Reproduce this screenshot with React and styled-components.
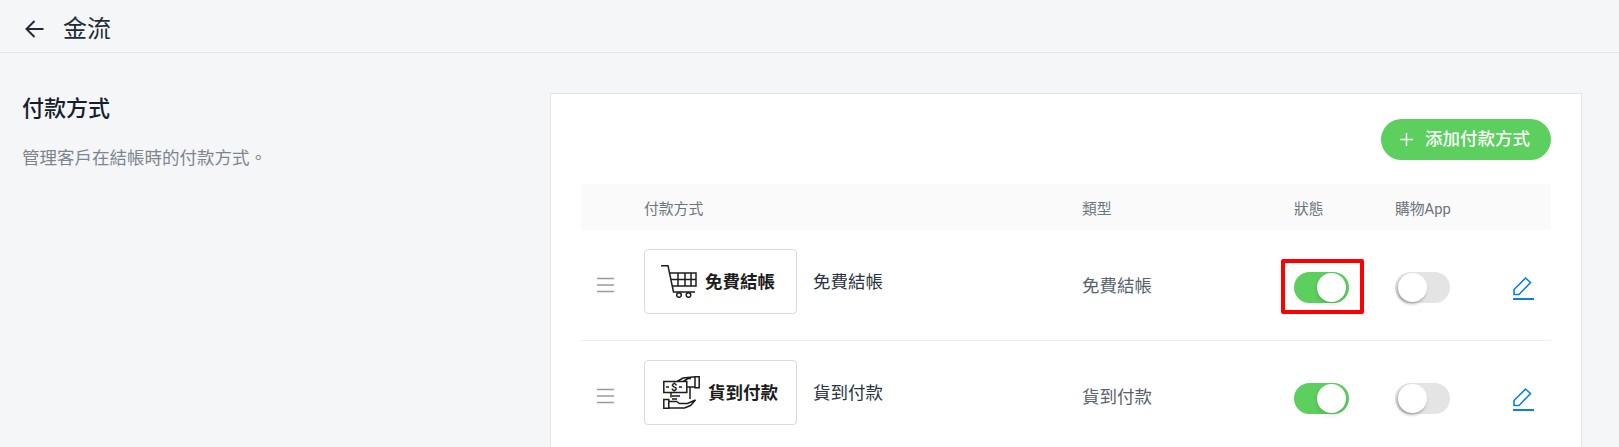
import React from "react";
import styled, { createGlobalStyle } from "styled-components";

const Global = createGlobalStyle`
  html, body { margin: 0; padding: 0; height: 100%; overflow: hidden; background: #f5f6f8; }
  body { font-family: Roboto, "Noto Sans CJK TC", sans-serif; color: #212b36; }
  * { box-sizing: border-box; }
`;
const Header = styled.header`
  height: 53px; display: flex; align-items: center; gap: 16px; padding: 6px 0 0 23px;
  border-bottom: 1px solid #e4e6ea;
`;
const BackIcon = styled.svg`width: 24px; height: 24px; flex: none;`;
const Title = styled.h1`margin: 0; font-size: 24px; font-weight: 400; line-height: 32px; color: #212b36;`;
const Main = styled.main`display: grid; grid-template-columns: 550px 1032px; padding-top: 40px;`;
const Intro = styled.section`padding: 1px 0 0 22px;`;
const IntroTitle = styled.h2`margin: 0; font-size: 22px; font-weight: 500; line-height: 30px; color: #16202c;`;
const IntroText = styled.p`margin: 22px 0 0; font-size: 17.5px; line-height: 24px; color: #7d868f;`;
const Card = styled.section`
  background: #fff; border: 1px solid #e3e5e8; padding: 25px 30px 0 30px; min-height: 420px;
`;
const Toolbar = styled.div`display: flex; justify-content: flex-end; margin-bottom: 24px;`;
const AddButton = styled.button`
  height: 41px; width: 170px; border: 0; border-radius: 21px; background: #5ccf5f; color: #fff;
  display: flex; align-items: center; gap: 12px; padding: 0 0 0 19px;
  font: 500 17.5px/1 Roboto, "Noto Sans CJK TC", sans-serif;
`;
const columns = "63px 438px 212px 101px 118px 1fr";
const HeadRow = styled.div`
  display: grid; grid-template-columns: ${columns}; align-items: center; height: 46px;
  background: #fafafa; font-size: 14.800px; color: #6d747c;
`;
const Row = styled.div`
  display: grid; grid-template-columns: ${columns}; align-items: center; height: 111px;
  border-bottom: 1px solid ${p => (p.$last ? "transparent" : "#eeeff1")};
`;
const Drag = styled.svg`width: 17px; height: 16px; margin-left: 16px;`;
const NameCell = styled.div`display: flex; align-items: center; gap: 16px; margin-top: -8px;`;
const LogoBox = styled.div`
  width: 153px; height: 65px; border: 1px solid #d9dadc; border-radius: 4px; background: #fff;
  display: flex; align-items: center; gap: ${p => p.$gap}px; padding: 0 0 0 ${p => p.$pad}px;
`;
const LogoText = styled.span`font-size: 17.5px; font-weight: 700; color: #1d1d1d; margin-top: -2px;`;
const Name = styled.span`font-size: 17.5px; color: #2a343e; margin-top: -1px;`;
const TypeText = styled.span`font-size: 17.5px; color: #59636d; margin-top: -2px;`;
const SwitchWrap = styled.div`position: relative; width: 55px; height: 31px; margin-top: 5px;`;
const Track = styled.div`
  width: 55px; height: 31px; border-radius: 16px; background: ${p => (p.$on ? "#5ccf5f" : "#e4e4e4")};
`;
const Knob = styled.div`
  position: absolute; top: 1px; left: ${p => (p.$on ? "23px" : "3px")}; width: 29px; height: 29px;
  border-radius: 50%; background: #fff; box-shadow: ${p => (p.$on ? "0 2px 4px rgba(0,0,0,.15)" : "-1px 2px 3px rgba(0,0,0,.3)")};
`;
const Highlight = styled.div`
  position: absolute; left: -13px; top: -13px; width: 83px; height: 55px;
  border: 4px solid #ff0000; border-radius: 2px;
`;
const EditIcon = styled.svg`width: 21px; height: 24px; margin-top: 5px; display: block;`;

const Arrow = () => (
  <BackIcon viewBox="0 0 24 24" fill="none" stroke="#212b36" strokeWidth="2">
    <path d="M20.500 12H3.500M11.500 4 3.500 12l8 8" />
  </BackIcon>
);
const Plus = () => (
  <svg width="13" height="13" viewBox="0 0 13 13" stroke="#fff" strokeWidth="1.4"><path d="M6.500 0v13M0 6.500h13" /></svg>
);
const Bars = () => (
  <Drag viewBox="0 0 17 16" stroke="#9a9a9a" strokeWidth="1.4"><path d="M0 1.500h17M0 8h17M0 14.500h17" /></Drag>
);
const Pencil = () => (
  <EditIcon viewBox="0 0 21 24" fill="none" stroke="#0a7fe6">
    <path strokeWidth="1.600" d="M1 18.500v-5L12.500 2l5 4.500L6 18.500H1Z" />
    <path strokeWidth="2" d="M0 23h21" />
  </EditIcon>
);
const Cart = () => (
  <svg width="36" height="33" viewBox="0 0 36 33" fill="none" stroke="#1d1d1d" strokeWidth="1.500">
    <path d="M0 .800h7l5.500 26.200H34" />
    <path d="M8.500 8h26.500v13H11M10 14.500h25M17 8v13M24 8v13M30 8v13" />
    <circle cx="18" cy="30" r="2.300" /><circle cx="27.500" cy="30" r="2.300" />
  </svg>
);
const Cash = () => (
  <svg width="37" height="33" viewBox="0 0 37 33" fill="none" stroke="#1d1d1d" strokeWidth="1.500">
    <path d="M.800 5.500h23v11H.800zM32 .800h4.200v11H32zM14 5.500l6-3.500 12-1.200M20 5.500l5-3h3M24 11h8" />
    <text x="8" y="15" fontSize="11" fontWeight="700" fill="#1d1d1d" stroke="none" fontFamily="Roboto, sans-serif">$</text>
    <path d="M3 11h3M16 11h3M9 20h8M9 23h5M27 11v12M8 16.500v5" />
    <path d="M.800 23.500h5v8.700h-5zM5.500 25.500h8l3 2h8l8-3.500-5 5.500-6 2.500H5.500" />
  </svg>
);
const Switch = ({ on, marked }) => (
  <SwitchWrap>
    <Track $on={on} />
    <Knob $on={on} />
    {marked && <Highlight />}
  </SwitchWrap>
);

const rows = [
  { name: "免費結帳", logo: <Cart />, gap: 8, pad: 16, marked: true },
  { name: "貨到付款", logo: <Cash />, gap: 8, pad: 18, marked: false, last: true },
];

export default function App() {
  return (
    <>
      <Global />
      <Header><Arrow /><Title>金流</Title></Header>
      <Main>
        <Intro>
          <IntroTitle>付款方式</IntroTitle>
          <IntroText>管理客戶在結帳時的付款方式。</IntroText>
        </Intro>
        <Card>
          <Toolbar><AddButton><Plus />添加付款方式</AddButton></Toolbar>
          <HeadRow>
            <span /><span>付款方式</span><span>類型</span><span>狀態</span><span>購物App</span><span />
          </HeadRow>
          {rows.map(r => (
            <Row key={r.name} $last={r.last}>
              <Bars />
              <NameCell>
                <LogoBox $gap={r.gap} $pad={r.pad}>{r.logo}<LogoText>{r.name}</LogoText></LogoBox>
                <Name>{r.name}</Name>
              </NameCell>
              <TypeText>{r.name}</TypeText>
              <Switch on marked={r.marked} />
              <Switch />
              <Pencil />
            </Row>
          ))}
        </Card>
      </Main>
    </>
  );
}
